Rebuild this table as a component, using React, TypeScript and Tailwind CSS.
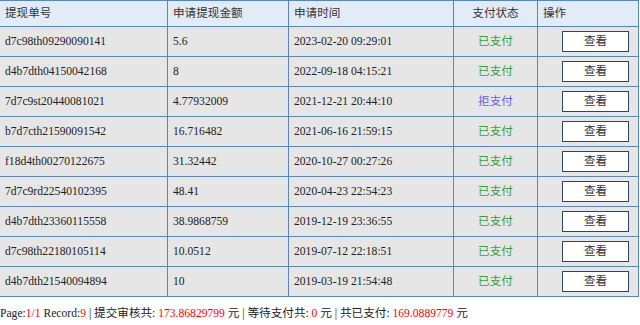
import React from "react";

const rows = [
  ["d7c98th09290090141", "5.6", "2023-02-20 09:29:01", "已支付"],
  ["d4b7dth04150042168", "8", "2022-09-18 04:15:21", "已支付"],
  ["7d7c9st20440081021", "4.77932009", "2021-12-21 20:44:10", "拒支付"],
  ["b7d7cth21590091542", "16.716482", "2021-06-16 21:59:15", "已支付"],
  ["f18d4th00270122675", "31.32442", "2020-10-27 00:27:26", "已支付"],
  ["7d7c9rd22540102395", "48.41", "2020-04-23 22:54:23", "已支付"],
  ["d4b7dth23360115558", "38.9868759", "2019-12-19 23:36:55", "已支付"],
  ["d7c98th22180105114", "10.0512", "2019-07-12 22:18:51", "已支付"],
  ["d4b7dth21540094894", "10", "2019-03-19 21:54:48", "已支付"],
];

export default function App() {
  return (
    <div
      className="w-[640px] h-[325px] bg-white overflow-hidden text-[11.6px] text-[#222]"
      style={{ fontFamily: '"Liberation Serif", "Noto Sans CJK SC", serif' }}
    >
      <table className="border-collapse ml-[-1px] w-[639px] table-fixed">
        <colgroup>
          <col className="w-[168px]" />
          <col className="w-[121px]" />
          <col className="w-[165px]" />
          <col className="w-[84px]" />
          <col className="w-[101px]" />
        </colgroup>
        <thead>
          <tr className="h-[26px] bg-[#e1ecf7]">
            <th className="border border-[#5a86bf] text-left font-normal pl-[5px] text-[#333]">提现单号</th>
            <th className="border border-[#5a86bf] text-left font-normal pl-[5px] text-[#333]">申请提现金额</th>
            <th className="border border-[#5a86bf] text-left font-normal pl-[5px] text-[#333]">申请时间</th>
            <th className="border border-[#5a86bf] text-center font-normal text-[#333]">支付状态</th>
            <th className="border border-[#5a86bf] text-left font-normal pl-[5px] text-[#333]">操作</th>
          </tr>
        </thead>
        <tbody>
          {rows.map((r) => (
            <tr key={r[0]} className="h-[30px] bg-[#e6e6e6]">
              <td className="border border-[#5a86bf] pl-[5px]">{r[0]}</td>
              <td className="border border-[#5a86bf] pl-[5px]">{r[1]}</td>
              <td className="border border-[#5a86bf] pl-[5px]">{r[2]}</td>
              <td
                className={
                  "border border-[#5a86bf] text-center " +
                  (r[3] === "拒支付" ? "text-[#6a5cf0]" : "text-[#3c9c3c]")
                }
              >
                {r[3]}
              </td>
              <td className="border border-[#5a86bf]">
                <div className="flex justify-end pr-[9px]">
                  <button className="w-[67px] h-[21px] bg-white border border-[#2a4866] text-[#333] text-[11.6px] leading-none">
                    查看
                  </button>
                </div>
              </td>
            </tr>
          ))}
        </tbody>
      </table>
      <div className="mt-[9px] whitespace-nowrap leading-[16px]">
        Page:<span className="text-[#ff0000]">1/1</span> Record:<span className="text-[#ff0000]">9</span> | 提交审核共: <span className="text-[#ff0000]">173.86829799</span> 元 | 等待支付共: <span className="text-[#ff0000]">0</span> 元 | 共已支付: <span className="text-[#ff0000]">169.0889779</span> 元
      </div>
    </div>
  );
}
